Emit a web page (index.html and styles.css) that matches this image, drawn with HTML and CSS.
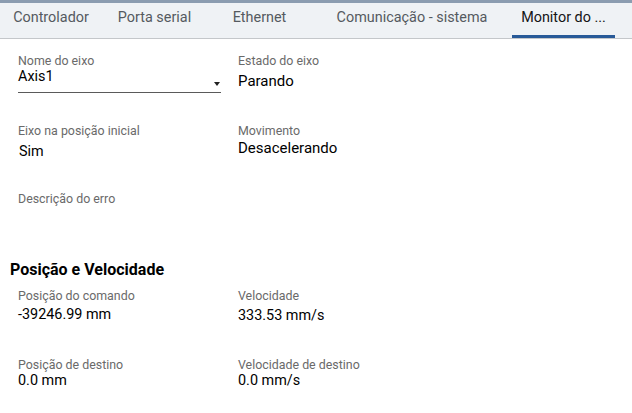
FILE: index.html
```html
<!DOCTYPE html>
<html lang="pt">
<head>
<meta charset="utf-8">
<title>Monitor do eixo</title>
<link rel="stylesheet" href="styles.css">
</head>
<body>
<nav class="tabs">
  <div class="tab tab-1">Controlador</div>
  <div class="tab tab-2">Porta serial</div>
  <div class="tab tab-3">Ethernet</div>
  <div class="tab tab-4">Comunicação - sistema</div>
  <div class="tab tab-5 active">Monitor do ...</div>
</nav>
<main class="content">
  <section class="fields top">
    <div class="field">
      <div class="label">Nome do eixo</div>
      <div class="select">
        <span class="value">Axis1</span>
        <span class="arrow"></span>
      </div>
    </div>
    <div class="field">
      <div class="label">Estado do eixo</div>
      <div class="value big low">Parando</div>
    </div>
    <div class="field">
      <div class="label">Eixo na posição inicial</div>
      <div class="value sim">Sim</div>
    </div>
    <div class="field">
      <div class="label">Movimento</div>
      <div class="value big">Desacelerando</div>
    </div>
    <div class="field">
      <div class="label">Descrição do erro</div>
      <div class="value"></div>
    </div>
  </section>
  <h2 class="heading">Posição e Velocidade</h2>
  <section class="fields bottom">
    <div class="field">
      <div class="label">Posição do comando</div>
      <div class="value off3">-39246.99 mm</div>
    </div>
    <div class="field">
      <div class="label">Velocidade</div>
      <div class="value off4">333.53 mm/s</div>
    </div>
    <div class="field">
      <div class="label">Posição de destino</div>
      <div class="value">0.0 mm</div>
    </div>
    <div class="field">
      <div class="label">Velocidade de destino</div>
      <div class="value">0.0 mm/s</div>
    </div>
  </section>
</main>
</body>
</html>
```

FILE: styles.css
```css
* { box-sizing: border-box; }
html, body { margin: 0; padding: 0; background: #ffffff; }
body {
  font-family: Roboto, "Liberation Sans", Arial, sans-serif;
  color: #111;
  width: 632px;
  height: 413px;
  overflow: hidden;
}
.tabs {
  display: flex;
  height: 39px;
  border-top: 3px solid #8b9cb0;
  border-bottom: 1px solid #c4c7ca;
  background: #eff2f5;
}
.tab {
  display: flex;
  justify-content: center;
  height: 35px;
  padding-top: 7px;
  font-size: 14.4px;
  line-height: 16px;
  color: #555a60;
  white-space: nowrap;
  border-bottom: 3px solid transparent;
}
.tab-1 { width: 102px; }
.tab-2 { width: 105px; }
.tab-3 { width: 105px; }
.tab-4 { width: 200px; }
.tab-5 { width: 103px; }
.tab.active {
  color: #151515;
  border-bottom-color: #285a98;
}
.content {
  padding: 15px 0 0 18px;
}
.fields {
  display: grid;
  grid-template-columns: 220px 220px;
  row-gap: 31px;
}
.fields.bottom { row-gap: 33px; }
.field {
  display: flex;
  flex-direction: column;
}
.label {
  font-size: 12.4px;
  line-height: 14px;
  color: #6a6a6a;
}
.value {
  font-size: 14.4px;
  line-height: 18px;
  min-height: 18px;
  color: #000;
}
.value.big { font-size: 15px; margin-top: 1px; }
.value.low { margin-top: 4px; }
.value.sim { margin-top: 5px; padding-left: 1px; }
.value.off3 { margin-top: 3px; }
.value.off4 { margin-top: 4px; }
.select {
  display: flex;
  justify-content: space-between;
  align-items: flex-end;
  width: 203px;
  padding-bottom: 6px;
  border-bottom: 1px solid #5a5a5a;
}
.arrow {
  width: 0;
  height: 0;
  margin: 0 1px 0 0;
  border-left: 3.5px solid transparent;
  border-right: 3.5px solid transparent;
  border-top: 4.5px solid #222;
}
.heading {
  margin: 36px 0 9px -8px;
  font-size: 16px;
  line-height: 20px;
  font-weight: 700;
  color: #000;
}
```
